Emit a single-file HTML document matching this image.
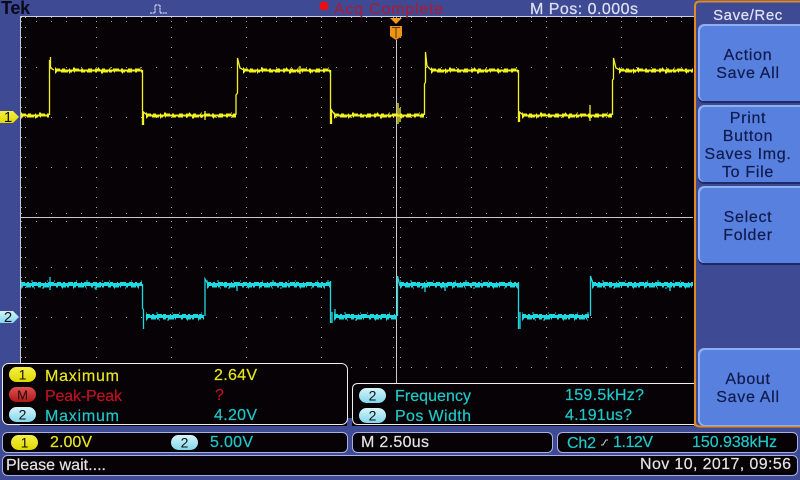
<!DOCTYPE html>
<html><head><meta charset="utf-8"><style>
html,body{margin:0;padding:0;background:#3f4a95;width:800px;height:480px;overflow:hidden}
svg{display:block}
text{font-family:"Liberation Sans",sans-serif;font-size:16px;stroke-width:.2px}
.b{fill:#101a4c;text-anchor:middle;letter-spacing:.7px;stroke:#101a4c}
.y{fill:#e6e620;stroke:#e6e620}.r{fill:#c01222;stroke:#c01222}.c{fill:#1fc8c8;stroke:#1fc8c8}.w{fill:#e2e2e2;stroke:#e2e2e2}
.n{font-size:14px;fill:#111;text-anchor:middle}
</style></head><body>
<svg width="800" height="480" viewBox="0 0 800 480" xmlns="http://www.w3.org/2000/svg">
<defs>
<pattern id="rows" x="21" y="17" width="15" height="50" patternUnits="userSpaceOnUse"><rect width="1" height="1" fill="#a8a8a8"/></pattern>
<pattern id="cols" x="21" y="17" width="75" height="10" patternUnits="userSpaceOnUse"><rect width="1" height="1" fill="#a8a8a8"/></pattern>
<pattern id="hx" x="21" y="0" width="15" height="800" patternUnits="userSpaceOnUse"><rect width="1" height="800" fill="#a8a8a8"/></pattern>
<pattern id="vy" x="0" y="17" width="800" height="10" patternUnits="userSpaceOnUse"><rect width="800" height="1" fill="#a8a8a8"/></pattern>
<linearGradient id="gy" x1="0" y1="0" x2="0" y2="1"><stop offset="0" stop-color="#f4f048"/><stop offset="1" stop-color="#e0d800"/></linearGradient>
<linearGradient id="gc" x1="0" y1="0" x2="0" y2="1"><stop offset="0" stop-color="#d8f4fa"/><stop offset="1" stop-color="#80d8ec"/></linearGradient>
<linearGradient id="gr" x1="0" y1="0" x2="0" y2="1"><stop offset="0" stop-color="#e05050"/><stop offset="1" stop-color="#b01818"/></linearGradient>
<path id="ty" d="M21 115.500H49M55 70.500H142M146 115.500H236M243 70.500H330M334 115.500H424M431 70.500H518M522 115.500H612M619 70.500H693"/>
<path id="tc" d="M21 284.500H142M146 316.500H204M207 284.500H330M334 316.500H397M400 284.500H518M522 316.500H589M592 284.500H693"/>
</defs>

<rect width="800" height="480" fill="#3f4a95"/>
<rect x="20" y="16" width="675" height="410" fill="#060206"/>
<rect x="20" y="16" width="675" height="1" fill="#d0d0e0"/>
<rect x="20" y="16" width="1" height="370" fill="#c8c8dc"/>

<!-- graticule -->
<g shape-rendering="crispEdges">
<rect x="21" y="17" width="672" height="360" fill="url(#rows)"/>
<rect x="21" y="17" width="672" height="360" fill="url(#cols)"/>
<rect x="21" y="21" width="672" height="1" fill="url(#hx)"/>
<rect x="21" y="213" width="672" height="1" fill="url(#hx)"/>
<rect x="21" y="221" width="672" height="1" fill="url(#hx)"/>
<rect x="25" y="17" width="1" height="360" fill="url(#vy)"/>
<rect x="393" y="17" width="1" height="360" fill="url(#vy)"/>
<rect x="400" y="17" width="1" height="360" fill="url(#vy)"/>
<rect x="21" y="217" width="672" height="1" fill="#c8c8c8"/>
<rect x="396" y="40" width="1" height="343" fill="#c8c8c8"/>
</g>

<!-- yellow trace -->
<g fill="none" stroke="#f2f222" shape-rendering="crispEdges">
<use href="#ty" stroke-width="2"/>
<use href="#ty" y="-1.500" stroke-width="1" stroke-dasharray="5 2 3 4 1 3 6 2 2 5 4 3"/>
<use href="#ty" y="1.500" stroke-width="1" stroke-dasharray="2 4 7 1 3 2 1 6 4 2 5 3"/>
<use href="#ty" y="-2.500" stroke-width="1" stroke-dasharray="1 17 2 23 1 11 1 29"/>
<use href="#ty" y="2.500" stroke-width="1" stroke-dasharray="1 13 1 31 2 19 1 37"/>
</g>
<g fill="none" stroke="#f2f222" stroke-width="1.300">
<path d="M49.500 115V60M50.500 57V68L54 70"/>
<path d="M142.500 70V125M143.500 125V112L147 115"/>
<path d="M236 115V95L237.500 93V58L240 68L244 70"/>
<path d="M330.500 70V124M331.500 124V110L335 115"/>
<path d="M424.500 115V84L425.500 82V52L427 66L431 70"/>
<path d="M518.500 70V122M519.500 122V112L523 115"/>
<path d="M612.500 115V80L613.500 79V58L616 68L620 70"/>
<path d="M398 103V124M400 108V122M590 105V121M205 111V120M300 66V74"/>
</g>

<!-- cyan trace -->
<g fill="none" stroke="#20d8e0" shape-rendering="crispEdges">
<use href="#tc" stroke-width="3"/>
<use href="#tc" y="-2" stroke-width="1.500" stroke-dasharray="4 2 2 3 5 1 3 4 1 2 6 3"/>
<use href="#tc" y="2" stroke-width="1.500" stroke-dasharray="2 3 5 1 2 4 3 2 6 1 1 5"/>
<use href="#tc" y="-3.500" stroke-width="1" stroke-dasharray="1 9 2 14 1 6 1 21"/>
<use href="#tc" y="3.500" stroke-width="1" stroke-dasharray="1 12 1 7 2 18 1 10"/>
</g>
<g fill="none" stroke="#20d8e0" stroke-width="1.300">
<path d="M142.500 284V308L143.500 310V329"/>
<path d="M205 316V279L208 284"/>
<path d="M330.500 281V323M332 323V312"/>
<path d="M397.500 316V276L400 286"/>
<path d="M518.500 282V329M520 329V312"/>
<path d="M590.500 316V276L593 284"/>
<path d="M50 277V290M96 284V290M237 284V291M425 284V292M445 284V291M670 284V291M335 309V316"/>
</g>

<!-- top bar -->
<text x="1" y="14" style="font-size:18px;font-weight:bold;letter-spacing:-.3px" fill="#0a0a1a">Tek</text>
<path d="M150 13H155V5H160V13H167" fill="none" stroke="#eef" stroke-width="1" stroke-dasharray="2 .6"/>
<circle cx="324" cy="6" r="4.500" fill="#f00c0c"/>
<text x="334" y="14" fill="#a0203f" stroke="#a0203f" textLength="109">Acq Complete</text>
<text x="530" y="14" fill="#dfe2f2" stroke="#dfe2f2" textLength="108">M Pos: 0.000s</text>

<!-- trigger marker -->
<path d="M390 18H402L396 24Z" fill="#f09a20"/>
<path d="M390 26H402V36L396 40L390 36Z" fill="#ec9418"/>
<path d="M392 27.500H400M396 27.500V38" stroke="#5a3a10" stroke-width="1" fill="none"/>

<!-- channel markers -->
<path d="M0 111H13L19 117L13 123H0Z" fill="url(#gy)"/>
<text x="8" y="122" class="n" style="font-size:15px">1</text>
<path d="M0 311H13L19 317L13 323H0Z" fill="url(#gc)"/>
<text x="8" y="322" class="n" style="font-size:15px">2</text>

<!-- side panel -->
<path d="M695 422Q695 426.500 700 426.500H800V1.500H700Q695 1.500 695 6Z" fill="#3f4a95" stroke="none"/>
<path d="M695 426V6Q695 1.500 700 1.500H800" fill="none" stroke="#e08a24" stroke-width="2"/>
<path d="M695 422Q695 426.500 700 426.500H800" fill="none" stroke="#e08a24" stroke-width="2"/>
<text x="748" y="20" text-anchor="middle" fill="#e0e4f4" stroke="#e0e4f4" style="font-size:15px;letter-spacing:.6px">Save/Rec</text>

<g>
<rect x="698" y="24" width="110" height="79" rx="6" fill="#1e2a68"/>
<rect x="698" y="24" width="110" height="77" rx="6" fill="#8fb0f0"/>
<rect x="700" y="26" width="110" height="75" rx="5" fill="#5780df"/>
<rect x="698" y="105" width="110" height="79" rx="6" fill="#1e2a68"/>
<rect x="698" y="105" width="110" height="77" rx="6" fill="#8fb0f0"/>
<rect x="700" y="107" width="110" height="75" rx="5" fill="#5780df"/>
<rect x="698" y="186" width="110" height="79" rx="6" fill="#1e2a68"/>
<rect x="698" y="186" width="110" height="77" rx="6" fill="#8fb0f0"/>
<rect x="700" y="188" width="110" height="75" rx="5" fill="#5780df"/>
<rect x="698" y="348" width="110" height="78" rx="6" fill="#8fb0f0"/>
<rect x="700" y="350" width="110" height="75" rx="5" fill="#5780df"/>
</g>
<text x="748" y="60" class="b">Action</text>
<text x="748" y="78" class="b">Save All</text>
<text x="748" y="123" class="b">Print</text>
<text x="748" y="141" class="b">Button</text>
<text x="748" y="159" class="b">Saves Img.</text>
<text x="748" y="177" class="b">To File</text>
<text x="748" y="222" class="b">Select</text>
<text x="748" y="240" class="b">Folder</text>
<text x="748" y="384" class="b">About</text>
<text x="748" y="402" class="b">Save All</text>

<!-- bottom bands -->
<path d="M347 418H352V476H347Z" fill="#3f4a95"/>
<rect x="2.500" y="363.500" width="345" height="61" rx="6" fill="#060206" stroke="#f0f0f0"/>
<path d="M694 383.500H358Q352.500 383.500 352.500 389V418Q352.500 424.500 358 424.500H694" fill="#060206" stroke="#f0f0f0"/>
<rect x="0" y="426" width="694" height="54" fill="#3f4a95"/>
<rect x="694" y="428" width="106" height="52" fill="#3f4a95"/>
<rect x="2.500" y="432.500" width="345" height="20" rx="5" fill="#060206" stroke="#aab0e4"/>
<rect x="352.500" y="432.500" width="200" height="20" rx="5" fill="#060206" stroke="#aab0e4"/>
<rect x="557.500" y="432.500" width="240" height="20" rx="5" fill="#060206" stroke="#aab0e4"/>
<rect x="2.500" y="455.500" width="795" height="20" rx="5" fill="#060206" stroke="#aab0e4"/>

<!-- measurement left -->
<rect x="9" y="367" width="27" height="15" rx="7.500" fill="url(#gy)"/><text x="22.500" y="379.500" class="n">1</text>
<rect x="9" y="387" width="27" height="15" rx="7.500" fill="url(#gr)"/><text x="22.500" y="399.500" class="n" style="font-size:13px">M</text>
<rect x="9" y="407" width="27" height="15" rx="7.500" fill="url(#gc)"/><text x="22.500" y="419.500" class="n">2</text>
<text x="45" y="381" class="y" textLength="74">Maximum</text>
<text x="45" y="401" class="r" textLength="77">Peak-Peak</text>
<text x="45" y="421" class="c" textLength="74">Maximum</text>
<text x="214" y="380" class="y" textLength="43">2.64V</text>
<text x="215" y="400" class="r">?</text>
<text x="214" y="420" class="c" textLength="43">4.20V</text>

<!-- measurement right -->
<rect x="359" y="388" width="27" height="15" rx="7.500" fill="url(#gc)"/><text x="372.500" y="400.500" class="n">2</text>
<rect x="359" y="408" width="27" height="15" rx="7.500" fill="url(#gc)"/><text x="372.500" y="420.500" class="n">2</text>
<text x="395" y="401" class="c" textLength="76">Frequency</text>
<text x="395" y="421" class="c" textLength="76">Pos Width</text>
<text x="565" y="400" class="c" textLength="79">159.5kHz?</text>
<text x="565" y="420" class="c" textLength="67">4.191us?</text>

<!-- channel row -->
<rect x="11" y="435" width="27" height="15" rx="7.500" fill="url(#gy)"/><text x="24.500" y="447.500" class="n">1</text>
<text x="50" y="447" class="y" textLength="42">2.00V</text>
<rect x="171" y="435" width="27" height="15" rx="7.500" fill="url(#gc)"/><text x="184.500" y="447.500" class="n">2</text>
<text x="210" y="447" class="c" textLength="43">5.00V</text>
<text x="361" y="447" class="w" textLength="68">M 2.50us</text>
<text x="567" y="448" class="c" textLength="29">Ch2</text>
<path d="M601 445H603L606 440H608" fill="none" stroke="#c8d8d8" stroke-width="1"/>
<text x="613" y="447" class="c" textLength="40">1.12V</text>
<text x="692" y="447" class="c" textLength="85">150.938kHz</text>

<!-- status row -->
<text x="6" y="470" class="w" textLength="100">Please wait....</text>
<text x="640" y="469" class="w" textLength="151">Nov 10, 2017, 09:56</text>
</svg>
</body></html>
